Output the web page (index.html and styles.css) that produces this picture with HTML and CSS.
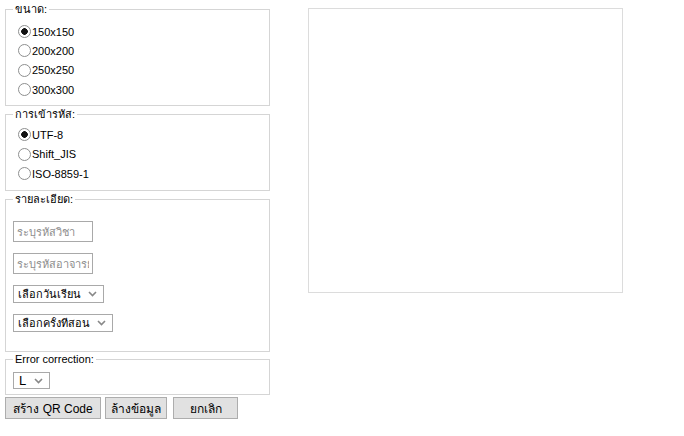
FILE: index.html
```html
<!DOCTYPE html>
<html lang="th">
<head>
  <meta charset="UTF-8">
  <meta name="viewport" content="width=device-width, initial-scale=1.0">
  <title>สร้าง QR Code</title>
  <link rel="stylesheet" href="styles.css">
</head>
<body>
  <div class="page">
    <form class="form-col">
      <fieldset class="group group-size">
        <legend>ขนาด:</legend>
        <label class="opt"><input type="radio" name="size" value="150" checked>150x150</label>
        <label class="opt"><input type="radio" name="size" value="200">200x200</label>
        <label class="opt"><input type="radio" name="size" value="250">250x250</label>
        <label class="opt"><input type="radio" name="size" value="300">300x300</label>
      </fieldset>

      <fieldset class="group group-enc">
        <legend>การเข้ารหัส:</legend>
        <label class="opt"><input type="radio" name="enc" value="UTF-8" checked>UTF-8</label>
        <label class="opt"><input type="radio" name="enc" value="Shift_JIS">Shift_JIS</label>
        <label class="opt"><input type="radio" name="enc" value="ISO-8859-1">ISO-8859-1</label>
      </fieldset>

      <fieldset class="group group-detail">
        <legend>รายละเอียด:</legend>
        <input class="text-in" type="text" placeholder="ระบุรหัสวิชา">
        <input class="text-in" type="text" placeholder="ระบุรหัสอาจารย์">
        <select class="sel">
          <option>เลือกวันเรียน</option>
        </select>
        <select class="sel">
          <option>เลือกครั้งที่สอน</option>
        </select>
      </fieldset>

      <fieldset class="group group-ec">
        <legend>Error correction:</legend>
        <select class="sel sel-ec">
          <option>L</option>
          <option>M</option>
          <option>Q</option>
          <option>H</option>
        </select>
      </fieldset>

      <div class="actions">
        <button type="button" class="btn btn-make">สร้าง QR Code</button>
        <button type="reset" class="btn btn-clear">ล้างข้อมูล</button>
        <button type="button" class="btn btn-cancel">ยกเลิก</button>
      </div>
    </form>

    <div class="qr-box" id="qrcode"></div>
  </div>
</body>
</html>
```

FILE: styles.css
```css
body {
  margin: 0;
  font-family: "Liberation Sans", Arial, sans-serif;
  font-size: 11px;
  color: #000;
  background: #fff;
}

.page {
  display: flex;
  align-items: flex-start;
  padding: 2px 0 0 5px;
}

.form-col {
  width: 265px;
  display: flex;
  flex-direction: column;
}

.group {
  margin: 0 0 1px;
  border: 1px solid #d5d5d5;
  padding: 6px 7px 6px;
  min-width: 0;
}

.group legend {
  padding: 0 2px;
  line-height: 14px;
}

.opt {
  display: flex;
  align-items: center;
  height: 19.33px;
}

.opt input {
  appearance: none;
  width: 13px;
  height: 13px;
  margin: 0 1px 0 5px;
  border: 1px solid #8e8f8f;
  border-radius: 50%;
  background: #fff;
  flex: none;
}

.opt input:checked {
  background: radial-gradient(circle, #111 0 3px, #fff 3.6px);
}

.group-enc {
  padding-top: 4px;
  padding-bottom: 7px;
}

.group-detail {
  display: flex;
  flex-direction: column;
  align-items: flex-start;
  gap: 11px;
  padding-top: 15px;
  padding-bottom: 19px;
  margin-bottom: 0;
}

.text-in {
  width: 80px;
  height: 21px;
  box-sizing: border-box;
  margin: 0;
  padding: 0 3px;
  border: 1px solid #a9a9a9;
  font: 11px "Liberation Sans", Arial, sans-serif;
}

.text-in::placeholder {
  color: #8d8d8d;
}

.sel {
  appearance: none;
  height: 18px;
  box-sizing: border-box;
  margin: 0;
  padding: 0 22px 0 4px;
  border: 1px solid #a9a9a9;
  border-radius: 0;
  background: #fff url("data:image/svg+xml,%3Csvg xmlns='http://www.w3.org/2000/svg' width='9' height='6'%3E%3Cpath d='M1 1l3.5 3.5L8 1' fill='none' stroke='%23888' stroke-width='1.6'/%3E%3C/svg%3E") no-repeat right 6px center;
  font: 11px "Liberation Sans", Arial, sans-serif;
  color: #000;
}

.group-ec {
  padding-top: 6px;
  padding-bottom: 5px;
}

.sel-ec {
  width: 37px;
  height: 17px;
  padding-left: 5px;
  font-size: 13px;
}

.actions {
  display: flex;
  gap: 4px;
  margin-top: 1px;
}

.btn {
  height: 22px;
  margin: 0;
  padding: 0;
  border: 1px solid #adadad;
  background: #e1e1e1;
  font: 12px "Liberation Sans", Arial, sans-serif;
  color: #000;
}

.btn-make {
  width: 96px;
}

.btn-clear {
  width: 62px;
}

.btn-cancel {
  width: 65px;
  margin-left: 2px;
}

.qr-box {
  width: 315px;
  height: 285px;
  box-sizing: border-box;
  margin: 6px 0 0 38px;
  border: 1px solid #dcdcdc;
}
```
